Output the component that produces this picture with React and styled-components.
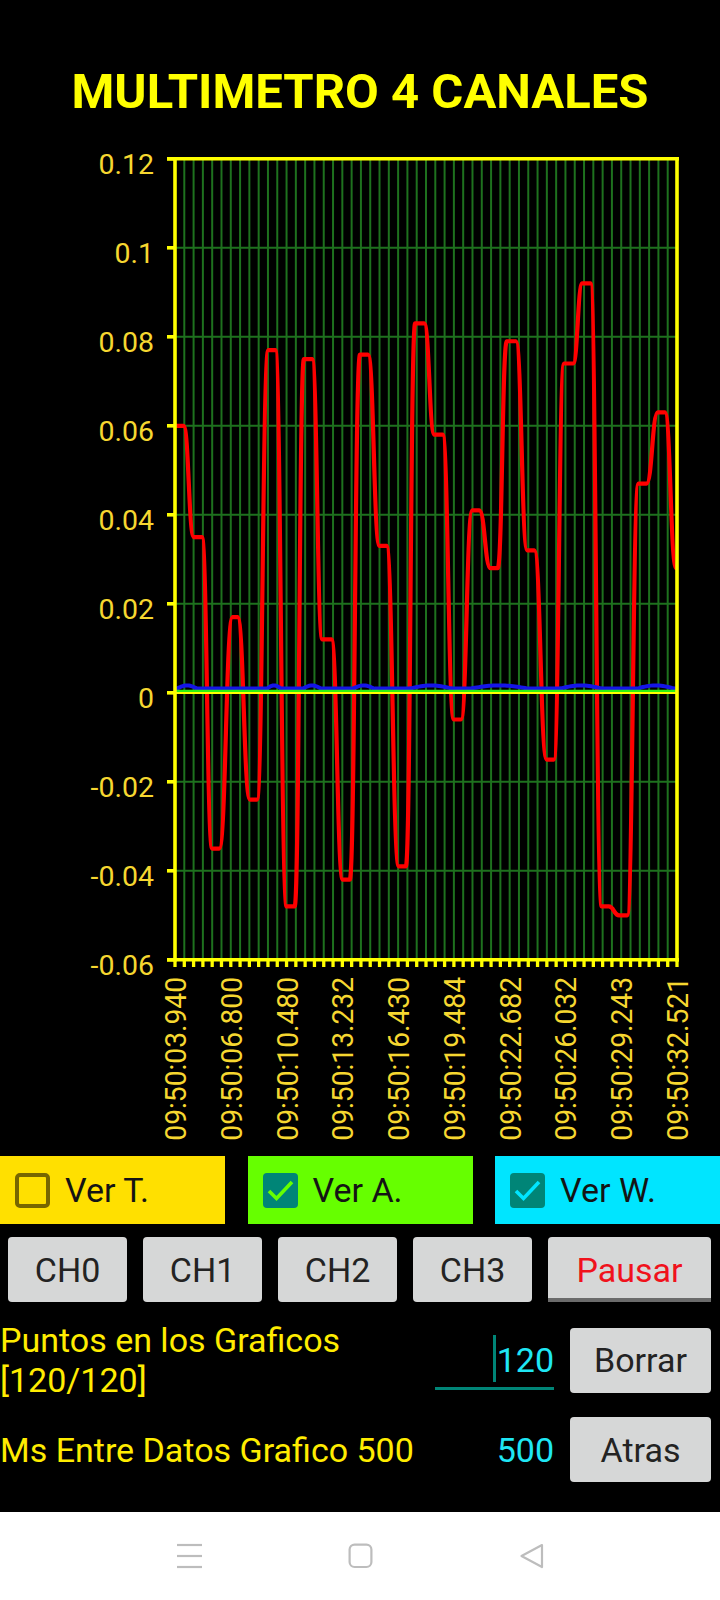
import React from 'react';
import styled, { createGlobalStyle } from 'styled-components';

const GlobalStyle = createGlobalStyle`
  html, body { margin: 0; padding: 0; background: #000; }
  body { font-family: Roboto, "Noto Sans", "Liberation Sans", sans-serif; }
  * { box-sizing: border-box; }
`;

const Screen = styled.div`
  width: 720px;
  height: 1600px;
  display: flex;
  flex-direction: column;
  background: #000;
  overflow: hidden;
`;

const Title = styled.h1`
  margin: 0;
  padding-top: 64px;
  height: 120px;
  text-align: center;
  font-size: 49px;
  font-weight: 700;
  line-height: 56px;
  color: #ffff00;
`;

const ChartSvg = styled.svg`
  display: block;
  flex: none;
`;

const ToggleRow = styled.div`
  display: flex;
  justify-content: space-between;
  height: 68px;
`;

const Toggle = styled.div`
  width: 225px;
  height: 100%;
  display: flex;
  align-items: center;
  gap: 15px;
  padding-left: 15px;
  background: ${(p) => p.$bg};
  font-size: 34px;
  color: #141414;
`;

const ButtonRow = styled.div`
  display: flex;
  gap: 16px;
  margin-top: 13px;
  padding: 0 9px 0 8px;
  height: 65px;
`;

const GrayButton = styled.button`
  width: ${(p) => p.$w || 119}px;
  height: 65px;
  margin: 0;
  padding: 0;
  border: none;
  border-radius: 4px;
  background: #d6d7d7;
  font-family: Roboto, "Noto Sans", sans-serif;
  font-size: 34px;
  color: #232323;
  display: flex;
  align-items: center;
  justify-content: center;
  flex: none;
`;

const ToggleButton = styled(GrayButton)`
  color: #f0121c;
  border-radius: 4px 4px 0 0;
  border-bottom: 4px solid #6b6b6b;
  padding-top: 4px;
`;

const SettingRow = styled.div`
  display: flex;
  align-items: center;
  padding-right: 9px;
  margin-top: ${(p) => p.$mt}px;
  height: ${(p) => p.$h}px;
`;

const Label = styled.div`
  flex: 1;
  min-width: 0;
  font-size: 34px;
  line-height: 40px;
  color: #ffec00;
`;

const InputField = styled.div`
  width: 119px;
  align-self: flex-start;
  margin-top: 15px;
  height: 55px;
  border-bottom: 3px solid #008577;
  display: flex;
  justify-content: flex-end;
  align-items: flex-end;
`;

const Caret = styled.span`
  width: 3px;
  height: 47px;
  background: #008577;
  margin: 0 1px 5px 0;
`;

const InputText = styled.span`
  font-size: 34px;
  line-height: 40px;
  color: #1fe6f4;
  margin-bottom: 7px;
`;

const Value = styled.div`
  width: 119px;
  text-align: right;
  font-size: 34px;
  line-height: 40px;
  color: #1fe6f4;
`;

const ActionButton = styled(GrayButton)`
  width: 141px;
  margin-left: 16px;
`;

const Spacer = styled.div`
  flex: 1;
`;

const NavBar = styled.div`
  height: 88px;
  background: #fff;
  display: flex;
  align-items: center;
  justify-content: center;
  gap: 146px;
`;

const NavIcon = styled.svg`
  display: block;
  width: 25px;
  height: 26px;
`;

/* ---------- chart geometry ---------- */
const PL = 175;
const PR = 677;
const yOf = (v) => 158.8 + (0.12 - v) * 4450;
const VDIV = 54;
const dx = (PR - PL) / VDIV;

const yLabels = ['0.12', '0.1', '0.08', '0.06', '0.04', '0.02', '0', '-0.02', '-0.04', '-0.06'];
const xLabels = [
  '09:50:03.940', '09:50:06.800', '09:50:10.480', '09:50:13.232', '09:50:16.430',
  '09:50:19.484', '09:50:22.682', '09:50:26.032', '09:50:29.243', '09:50:32.521',
];

const redData = [
  [175.4, 0.06], [183.6, 0.06], [193.8, 0.035], [201.9, 0.035], [212.1, -0.035], [219.3, -0.035],
  [232.5, 0.017], [237.6, 0.017], [249.9, -0.024], [257, -0.024], [268.2, 0.077], [275.3, 0.077],
  [286.6, -0.048], [294.7, -0.048], [303.9, 0.075], [312.1, 0.075], [322.3, 0.012], [331.4, 0.012],
  [342.7, -0.042], [349.8, -0.042], [360, 0.076], [368.1, 0.076], [379.4, 0.033], [386.5, 0.033],
  [398.7, -0.039], [405.9, -0.039], [415.1, 0.083], [424.2, 0.083], [434.4, 0.058], [442.6, 0.058],
  [453.8, -0.006], [461, -0.006], [472.2, 0.041], [479.3, 0.041], [490.5, 0.028], [497.7, 0.028],
  [506.8, 0.079], [516, 0.079], [527.2, 0.032], [534.4, 0.032], [546.6, -0.015], [553.8, -0.015],
  [564, 0.074], [573.1, 0.074], [582.3, 0.092], [590.5, 0.092], [601.7, -0.048], [608.8, -0.048],
  [619, -0.05], [627.2, -0.05], [638.4, 0.047], [646.5, 0.047], [657.8, 0.063], [664.9, 0.063],
  [676.1, 0.028],
];

function bezierPath(pts) {
  let d = `M${pts[0][0]} ${pts[0][1].toFixed(2)}`;
  for (let i = 1; i < pts.length; i++) {
    const [x0, y0] = pts[i - 1];
    const [x1, y1] = pts[i];
    const mx = (x0 + x1) / 2;
    d += ` C${mx.toFixed(2)} ${y0.toFixed(2)} ${mx.toFixed(2)} ${y1.toFixed(2)} ${x1} ${y1.toFixed(2)}`;
  }
  return d;
}

const redPath = bezierPath(redData.map(([x, v]) => [x, yOf(v)]));

const bumps = [[177, 197], [267, 281], [303, 321], [353, 374], [410, 452], [470, 528], [560, 602], [637, 674]];
const bluePoints = (() => {
  const pts = [];
  for (let x = PL; x <= PR; x += 2) {
    let y = 688.6;
    for (const [a, b] of bumps) {
      if (x > a && x < b) {
        const t = (x - a) / (b - a);
        y -= 3.2 * Math.sin(Math.PI * t);
      }
    }
    pts.push(`${x},${y.toFixed(2)}`);
  }
  return pts.join(' ');
})();

function Chart() {
  const gridV = [];
  for (let i = 1; i < VDIV; i++) {
    const x = PL + i * dx;
    gridV.push(<line key={i} x1={x} y1={yOf(0.12)} x2={x} y2={yOf(-0.06)} stroke="#1e711e" strokeWidth="2" />);
  }
  const xTicks = [];
  for (let i = 0; i <= VDIV; i++) {
    const x = PL + i * dx;
    xTicks.push(<line key={i} x1={x} y1={960} x2={x} y2={967} stroke="#ffff00" strokeWidth="3.3" />);
  }
  return (
    <ChartSvg width="720" height="1036" viewBox="0 120 720 1036">
      {gridV}
      {yLabels.map((l, i) => {
        const y = yOf(0.12 - i * 0.02);
        return (
          <g key={l}>
            {i > 0 && i < yLabels.length - 1 && (
              <line x1={PL} y1={y} x2={PR} y2={y} stroke="#1e711e" strokeWidth="2" />
            )}
            <line x1={167} y1={y} x2={PL} y2={y} stroke="#ffff00" strokeWidth="3.6" />
            <text x="154" y={y + 15} textAnchor="end" fontFamily="Roboto, sans-serif" fontSize="28.5" fill="#f6d730">
              {l}
            </text>
          </g>
        );
      })}
      {xTicks}
      {xLabels.map((l, k) => {
        const x = PL + k * 6 * dx + 11;
        return (
          <text
            key={l}
            transform={`translate(${x.toFixed(2)},977) rotate(-90) scale(0.94,1)`}
            textAnchor="end"
            fontFamily="Roboto, sans-serif"
            fontSize="30"
            fill="#f6d730"
          >
            {l}
          </text>
        );
      })}
      <path d={redPath} fill="none" stroke="#ff0000" strokeWidth="4.2" strokeLinejoin="round" />
      <polyline points={bluePoints} fill="none" stroke="#1515e8" strokeWidth="4" strokeLinejoin="round" />
      <line x1={PL} y1={690.9} x2={PR} y2={690.9} stroke="#2ef012" strokeWidth="2.4" />
      <line x1={PL} y1={693.1} x2={PR} y2={693.1} stroke="#ffff00" strokeWidth="2" />
      <line x1={167} y1={158.8} x2={679} y2={158.8} stroke="#ffff00" strokeWidth="3.6" />
      <line x1={167} y1={959.8} x2={679} y2={959.8} stroke="#ffff00" strokeWidth="3.6" />
      <line x1={PL} y1={157} x2={PL} y2={961.6} stroke="#ffff00" strokeWidth="3.6" />
      <line x1={PR} y1={157} x2={PR} y2={961.6} stroke="#ffff00" strokeWidth="3.6" />
    </ChartSvg>
  );
}

function CheckBox({ checked, bg }) {
  if (!checked) {
    return (
      <svg width="35" height="35" viewBox="0 0 35 35">
        <rect x="2" y="2" width="31" height="31" rx="3" fill="none" stroke="#776600" strokeWidth="4" />
      </svg>
    );
  }
  return (
    <svg width="35" height="35" viewBox="0 0 35 35">
      <rect x="0" y="0" width="35" height="35" rx="4" fill="#008577" />
      <polyline points="6,18 13.5,25.5 29,9" fill="none" stroke={bg} strokeWidth="3.6" />
    </svg>
  );
}

const toggles = [
  { label: 'Ver T.', bg: '#ffe000', checked: false },
  { label: 'Ver A.', bg: '#66ff00', checked: true },
  { label: 'Ver W.', bg: '#00e5ff', checked: true },
];

export default function App() {
  return (
    <>
      <GlobalStyle />
      <Screen>
        <Title>MULTIMETRO 4 CANALES</Title>
        <Chart />
        <ToggleRow>
          {toggles.map((t) => (
            <Toggle key={t.label} $bg={t.bg}>
              <CheckBox checked={t.checked} bg={t.bg} />
              <span>{t.label}</span>
            </Toggle>
          ))}
        </ToggleRow>
        <ButtonRow>
          <GrayButton>CH0</GrayButton>
          <GrayButton>CH1</GrayButton>
          <GrayButton>CH2</GrayButton>
          <GrayButton>CH3</GrayButton>
          <ToggleButton $w={163}>Pausar</ToggleButton>
        </ButtonRow>
        <SettingRow $mt={18} $h={80}>
          <Label>Puntos en los Graficos [120/120]</Label>
          <InputField>
            <Caret />
            <InputText>120</InputText>
          </InputField>
          <ActionButton>Borrar</ActionButton>
        </SettingRow>
        <SettingRow $mt={17} $h={65}>
          <Label>Ms Entre Datos Grafico 500</Label>
          <Value>500</Value>
          <ActionButton>Atras</ActionButton>
        </SettingRow>
        <Spacer />
        <NavBar>
          <NavIcon viewBox="0 0 25 26">
            <g stroke="#bdbdbd" strokeWidth="2.2">
              <line x1="0" y1="2" x2="25" y2="2" />
              <line x1="0" y1="13" x2="25" y2="13" />
              <line x1="0" y1="24" x2="25" y2="24" />
            </g>
          </NavIcon>
          <NavIcon viewBox="0 0 25 26">
            <rect x="1.6" y="1.6" width="21.8" height="22.4" rx="5" fill="none" stroke="#bdbdbd" strokeWidth="2.2" />
          </NavIcon>
          <NavIcon viewBox="0 0 25 26">
            <path d="M23 2 L2.5 13 L23 24 Z" fill="none" stroke="#bdbdbd" strokeWidth="2.2" strokeLinejoin="round" />
          </NavIcon>
        </NavBar>
      </Screen>
    </>
  );
}
